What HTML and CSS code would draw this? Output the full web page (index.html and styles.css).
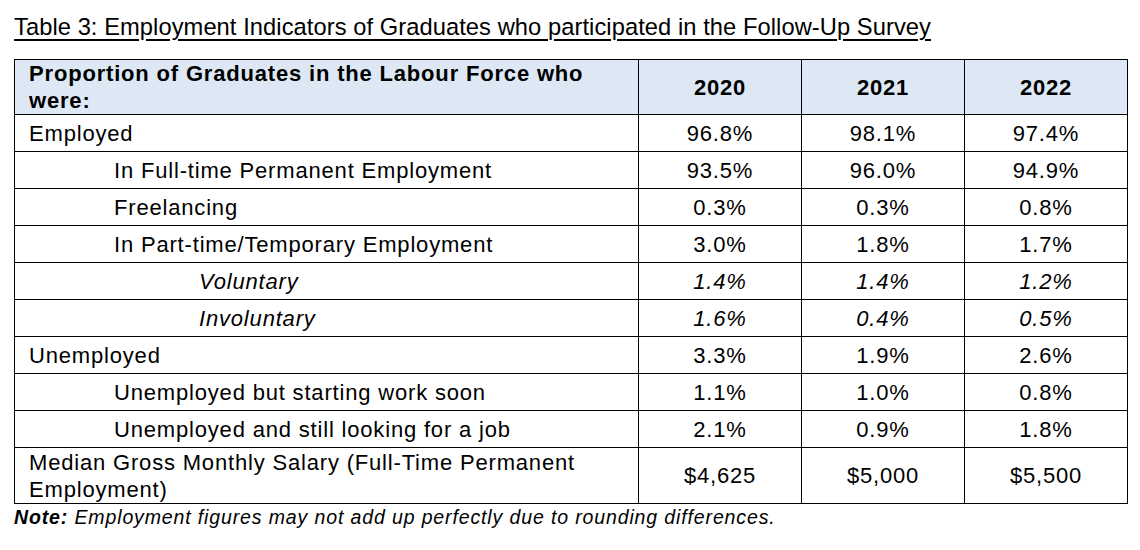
FILE: index.html
```html
<!DOCTYPE html>
<html>
<head>
<meta charset="utf-8">
<link rel="stylesheet" href="styles.css">
</head>
<body>
<div class="page">
  <h1 class="title">Table 3: Employment Indicators of Graduates who participated in the Follow-Up Survey</h1>
  <table class="tbl">
    <colgroup>
      <col class="c-label">
      <col class="c-year">
      <col class="c-year">
      <col class="c-year">
    </colgroup>
    <thead>
      <tr class="head">
        <th class="lbl">Proportion of Graduates in the Labour Force who were:</th>
        <th>2020</th>
        <th>2021</th>
        <th>2022</th>
      </tr>
    </thead>
    <tbody>
      <tr><td class="lbl">Employed</td><td>96.8%</td><td>98.1%</td><td>97.4%</td></tr>
      <tr><td class="lbl l1">In Full-time Permanent Employment</td><td>93.5%</td><td>96.0%</td><td>94.9%</td></tr>
      <tr><td class="lbl l1">Freelancing</td><td>0.3%</td><td>0.3%</td><td>0.8%</td></tr>
      <tr><td class="lbl l1">In Part-time/Temporary Employment</td><td>3.0%</td><td>1.8%</td><td>1.7%</td></tr>
      <tr class="it"><td class="lbl l2">Voluntary</td><td>1.4%</td><td>1.4%</td><td>1.2%</td></tr>
      <tr class="it"><td class="lbl l2">Involuntary</td><td>1.6%</td><td>0.4%</td><td>0.5%</td></tr>
      <tr><td class="lbl">Unemployed</td><td>3.3%</td><td>1.9%</td><td>2.6%</td></tr>
      <tr><td class="lbl l1">Unemployed but starting work soon</td><td>1.1%</td><td>1.0%</td><td>0.8%</td></tr>
      <tr><td class="lbl l1">Unemployed and still looking for a job</td><td>2.1%</td><td>0.9%</td><td>1.8%</td></tr>
      <tr class="tall"><td class="lbl">Median Gross Monthly Salary (Full-Time Permanent Employment)</td><td>$4,625</td><td>$5,000</td><td>$5,500</td></tr>
    </tbody>
  </table>
  <p class="note"><b>Note:</b> Employment figures may not add up perfectly due to rounding differences.</p>
</div>
</body>
</html>
```
FILE: styles.css
```css
html, body {
  margin: 0;
  padding: 0;
  background: #ffffff;
}
body {
  font-family: "Liberation Sans", Arial, sans-serif;
  color: #000000;
}
.page {
  padding: 14px 0 0 14px;
}
.title {
  margin: 0;
  font-size: 23.7px;
  font-weight: normal;
  line-height: 26px;
  letter-spacing: 0.07px;
  text-decoration: underline;
  text-underline-offset: 4px;
  text-decoration-thickness: 1.5px;
}
.tbl {
  margin-top: 19px;
  border-collapse: collapse;
  width: 1113px;
  table-layout: fixed;
  font-size: 22px;
  letter-spacing: 0.82px;
}
.c-label { width: 624px; }
.c-year { width: 163px; }
.tbl th, .tbl td {
  border: 1px solid #000000;
  padding: 0;
  height: 36px;
  text-align: center;
  vertical-align: middle;
  line-height: 27px;
}
.head th {
  background: #dde8f4;
  font-weight: bold;
  height: 54px;
  letter-spacing: 0.82px;
}
.tbl .lbl {
  text-align: left;
  padding-left: 14px;
  padding-right: 8px;
}
.tbl .l1 { padding-left: 99px; }
.tbl .l2 { padding-left: 184px; }
.it td { font-style: italic; }
.tall td { height: 55px; }
.note {
  margin: 0;
  font-size: 19.5px;
  letter-spacing: 0.87px;
  font-style: italic;
  line-height: 26px;
}
```
